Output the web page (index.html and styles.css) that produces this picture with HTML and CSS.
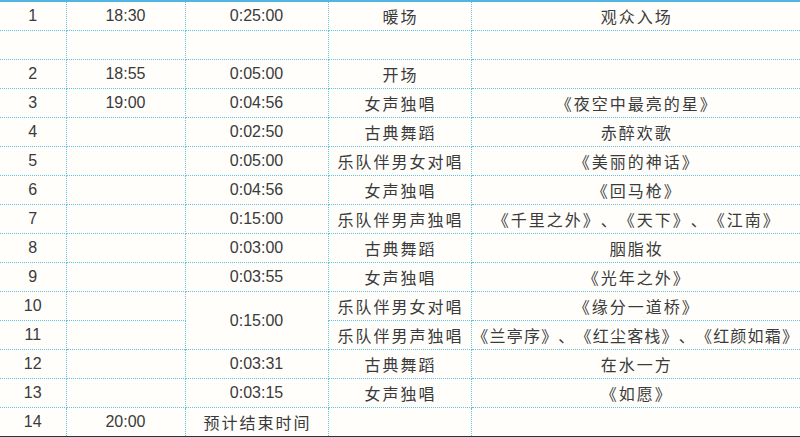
FILE: index.html
```html
<!DOCTYPE html>
<html lang="zh-CN">
<head>
<meta charset="utf-8">
<title>节目单</title>
<link rel="stylesheet" href="styles.css">
</head>
<body>
<table class="sched">
  <colgroup>
    <col class="c1"><col class="c2"><col class="c3"><col class="c4"><col class="c5">
  </colgroup>
  <tbody>
    <tr><td>1</td><td>18:30</td><td>0:25:00</td><td class="zh">暖场</td><td class="zh">观众入场</td></tr>
    <tr><td></td><td></td><td></td><td></td><td></td></tr>
    <tr><td>2</td><td>18:55</td><td>0:05:00</td><td class="zh">开场</td><td></td></tr>
    <tr><td>3</td><td>19:00</td><td>0:04:56</td><td class="zh">女声独唱</td><td class="zh">《夜空中最亮的星》</td></tr>
    <tr><td>4</td><td></td><td>0:02:50</td><td class="zh">古典舞蹈</td><td class="zh">赤醉欢歌</td></tr>
    <tr><td>5</td><td></td><td>0:05:00</td><td class="zh">乐队伴男女对唱</td><td class="zh">《美丽的神话》</td></tr>
    <tr><td>6</td><td></td><td>0:04:56</td><td class="zh">女声独唱</td><td class="zh">《回马枪》</td></tr>
    <tr><td>7</td><td></td><td>0:15:00</td><td class="zh">乐队伴男声独唱</td><td class="zh">《千里之外》、《天下》、《江南》</td></tr>
    <tr><td>8</td><td></td><td>0:03:00</td><td class="zh">古典舞蹈</td><td class="zh">胭脂妆</td></tr>
    <tr><td>9</td><td></td><td>0:03:55</td><td class="zh">女声独唱</td><td class="zh">《光年之外》</td></tr>
    <tr><td>10</td><td></td><td rowspan="2">0:15:00</td><td class="zh">乐队伴男女对唱</td><td class="zh">《缘分一道桥》</td></tr>
    <tr><td>11</td><td></td><td class="zh">乐队伴男声独唱</td><td class="zh tight">《兰亭序》、《红尘客栈》、《红颜如霜》</td></tr>
    <tr><td>12</td><td></td><td>0:03:31</td><td class="zh">古典舞蹈</td><td class="zh">在水一方</td></tr>
    <tr><td>13</td><td></td><td>0:03:15</td><td class="zh">女声独唱</td><td class="zh">《如愿》</td></tr>
    <tr class="last"><td>14</td><td>20:00</td><td class="zh">预计结束时间</td><td></td><td></td></tr>
  </tbody>
</table>
</body>
</html>
```

FILE: styles.css
```css
html, body {
  margin: 0;
  padding: 0;
  background: #fffefb;
}
body {
  width: 800px;
  height: 437px;
  overflow: hidden;
}
.sched {
  width: 800px;
  table-layout: fixed;
  border-collapse: collapse;
  border-top: 2px solid #4fb6e2;
  border-bottom: 2px solid #243646;
  font-family: "Liberation Sans", "Noto Sans CJK SC", sans-serif;
  font-size: 16px;
  color: #3a3a3a;
}
.c1 { width: 66px; }
.c2 { width: 119px; }
.c3 { width: 143px; }
.c4 { width: 143px; }
.c5 { width: 329px; }
.sched td {
  height: 28px;
  padding: 0;
  text-align: center;
  vertical-align: middle;
  border: 1px dotted #62c0e4;
  white-space: nowrap;
  overflow: visible;
  line-height: 18px;
}
.sched tr:first-child td { border-top: none; }
.sched tr.last td { border-bottom: none; }
.sched td:first-child { border-left: none; }
.sched td:last-child { border-right: none; }
.sched td.zh {
  font-family: "Noto Sans CJK SC", sans-serif;
  letter-spacing: 2px;
  text-indent: 2px;
  text-spacing-trim: space-all;
}
.sched td.zh.tight {
  letter-spacing: 1.2px;
  text-indent: 0;
}
```
